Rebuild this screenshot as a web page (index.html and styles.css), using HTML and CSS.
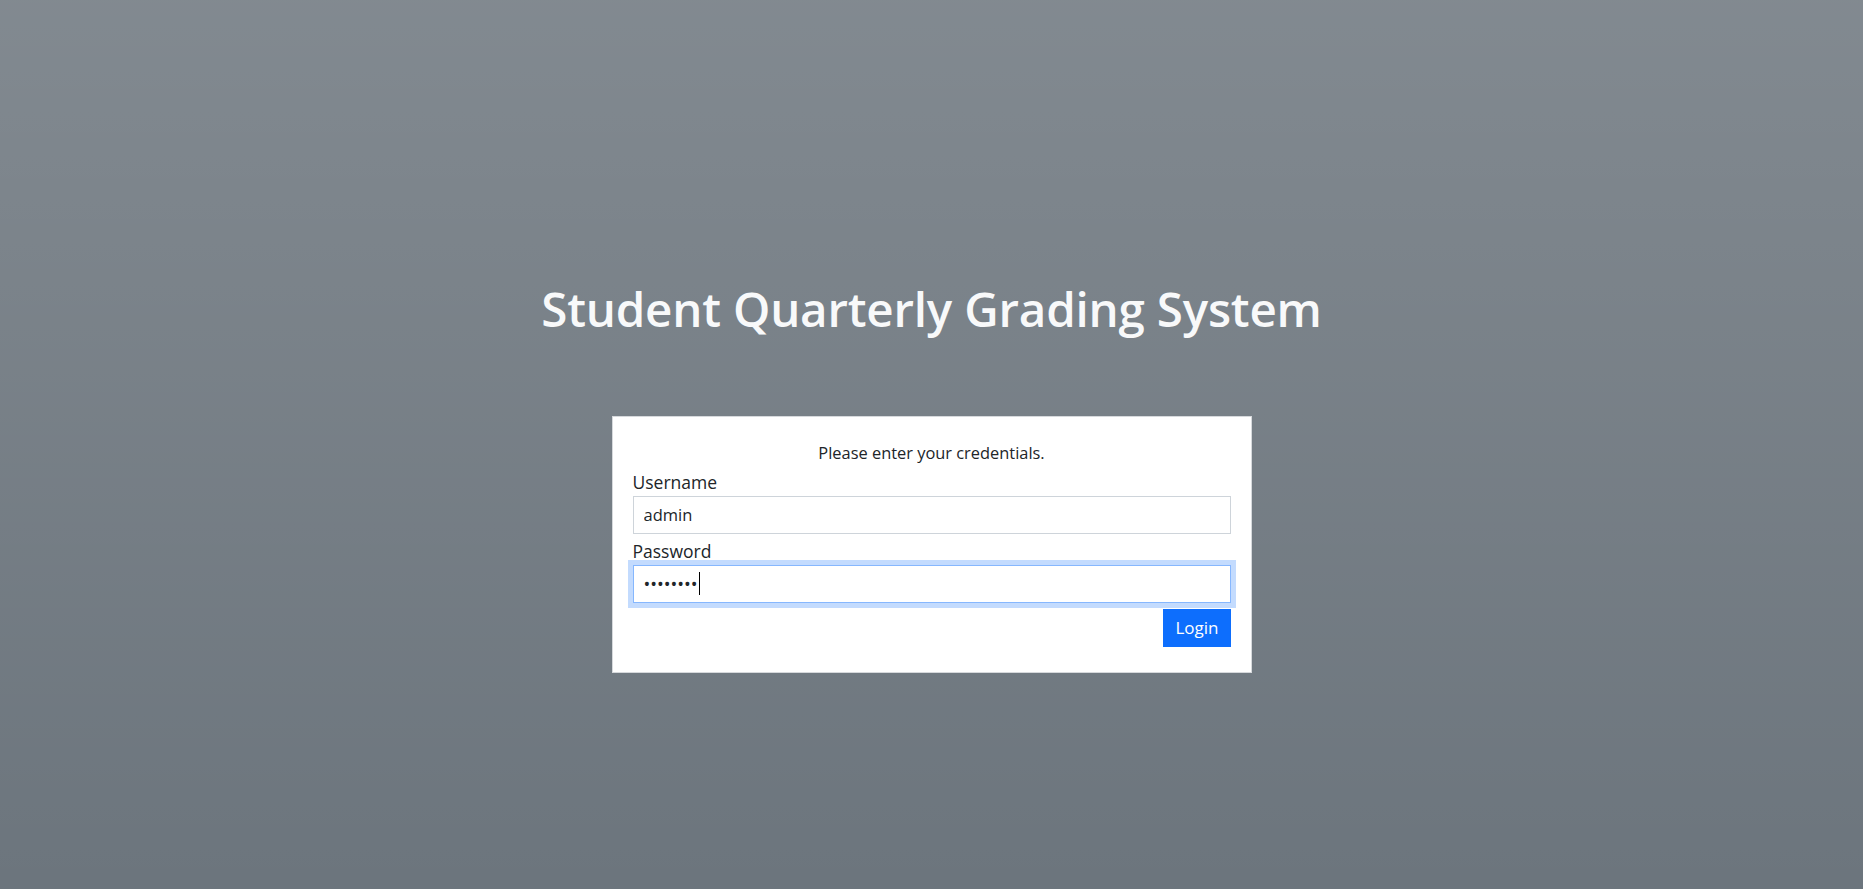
FILE: index.html
```html
<!DOCTYPE html>
<html lang="en">
<head>
<meta charset="utf-8">
<title>Student Quarterly Grading System</title>
<link rel="stylesheet" href="styles.css">
</head>
<body>
<main class="page">
  <h1 class="title">Student Quarterly Grading System</h1>
  <form class="card">
    <p class="hint">Please enter your credentials.</p>
    <label class="label" for="username">Username</label>
    <input class="field" id="username" type="text" value="admin">
    <label class="label" for="password">Password</label>
    <div class="field field-focus" id="password"><span class="dots">••••••••</span><span class="caret"></span></div>
    <div class="actions">
      <button class="btn" type="button">Login</button>
    </div>
  </form>
</main>
</body>
</html>
```

FILE: styles.css
```css
html, body {
  margin: 0;
  padding: 0;
  height: 100%;
}
body {
  background-color: #6c757d;
  background-image: linear-gradient(180deg, rgba(255,255,255,0.15), rgba(255,255,255,0));
  font-family: "Open Sans", "Noto Sans", sans-serif;
  color: #212529;
}
.page {
  display: flex;
  flex-direction: column;
  align-items: center;
  padding-top: 280px;
  box-sizing: border-box;
  min-height: 100%;
}
.title {
  margin: 0;
  font-size: 47.5px;
  line-height: 57.6px;
  font-weight: 600;
  color: #f8f9fa;
  letter-spacing: -0.2px;
}
.card {
  margin-top: 78px;
  width: 640px;
  box-sizing: border-box;
  background: #fff;
  border: 1px solid #d6d9dc;
  padding: 20px 20px 25px;
  display: flex;
  flex-direction: column;
}
.hint {
  margin: 4px 0 0;
  text-align: center;
  font-size: 16.4px;
  line-height: 24px;
}
.label {
  margin-top: 4px;
  font-size: 17.5px;
  line-height: 27px;
}
.field {
  display: block;
  box-sizing: border-box;
  height: 38px;
  width: 100%;
  margin: 0;
  padding: 0 10px;
  border: 1px solid #ced4da;
  border-radius: 0;
  background: #fff;
  font-family: inherit;
  font-size: 16.5px;
  color: #212529;
  outline: none;
}
.field-focus {
  display: flex;
  align-items: center;
  border-color: #86b7fe;
  box-shadow: 0 0 0 5px #c3dbfe;
}
.dots {
  font-size: 18px;
  letter-spacing: 0;
  color: #212529;
}
.caret {
  display: inline-block;
  width: 1px;
  height: 23px;
  margin-left: 1px;
  background: #000;
}
.actions {
  display: flex;
  justify-content: flex-end;
  margin-top: 6px;
}
.btn {
  height: 38px;
  padding: 0 12px;
  border: 0;
  border-radius: 0;
  background: #0d6efd;
  color: #fff;
  font-family: inherit;
  font-size: 17px;
  cursor: pointer;
}
```
